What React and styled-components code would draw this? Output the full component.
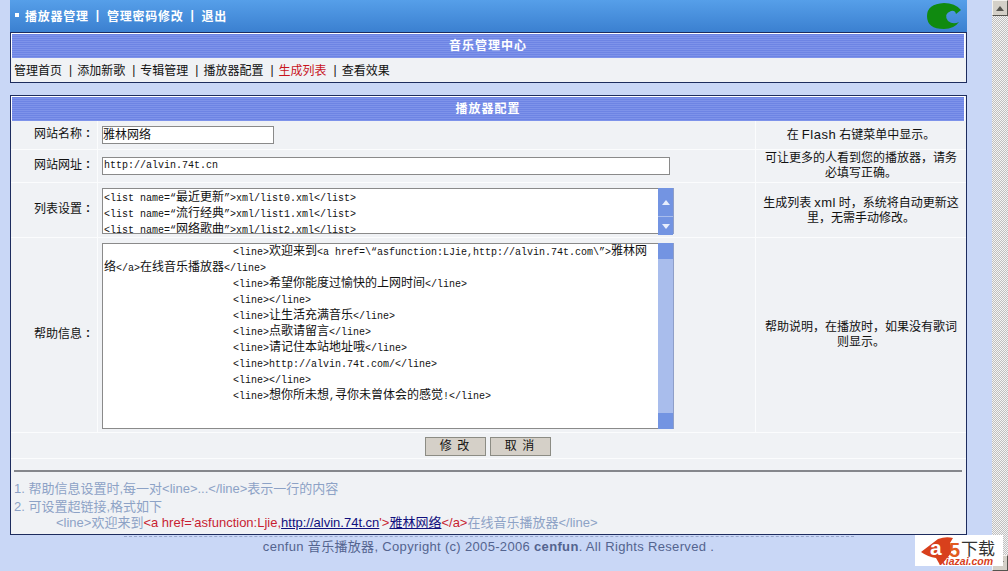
import React from 'react';
import styled, { createGlobalStyle } from 'styled-components';

const SANS = '"Liberation Sans", "Noto Sans CJK SC", sans-serif';
const CJK = '"Noto Sans CJK SC", sans-serif';

const GlobalStyle = createGlobalStyle`
  html, body {
    margin: 0;
    padding: 0;
    height: 571px;
    overflow: hidden;
    background: #c9d7f6;
    font-family: ${SANS};
    font-size: 12px;
    color: #111;
  }
`;

const Page = styled.div`
  position: relative;
  display: flex;
  width: 1008px;
  height: 571px;
  overflow: hidden;
`;

const Main = styled.div`
  width: 992px;
  padding-left: 10px;
  box-sizing: border-box;
`;

const Content = styled.div`
  width: 957px;
`;

const TopBar = styled.div`
  height: 32px;
  padding: 0 6px 0 5px;
  display: flex;
  align-items: center;
  justify-content: space-between;
  background: linear-gradient(#569fe9, #3b80d0);
  color: #fff;
  font-weight: bold;
`;

const TopLinks = styled.div`
  display: flex;
  align-items: center;
  gap: 7px;
  padding-bottom: 2px;
  letter-spacing: 0.75px;
`;

const Dot = styled.span`
  width: 4px;
  height: 4px;
  margin-right: -1px;
  background: #fff;
`;

const Panel = styled.div`
  border: 1px solid #1d2c5e;
  background: #f0f2f5;
  margin-bottom: 12px;
`;

const PanelTitle = styled.div`
  height: 24px;
  line-height: 24px;
  border: 1px solid #fff;
  border-bottom: 0;
  margin-right: 1px;
  text-align: center;
  color: #fff;
  font-weight: bold;
  letter-spacing: 1px;
  background: repeating-linear-gradient(#6d84e4 0 1px, #7e93ea 1px 2px);
`;

const Nav = styled.div`
  height: 23px;
  padding: 0 0 1px 3px;
  display: flex;
  align-items: center;
  gap: 5px;
`;

const NavLink = styled.span`
  color: ${(p) => (p.$active ? '#c8141e' : '#111')};
`;

const Sep = styled.span`
  margin-left: 2px;
  font-weight: normal;
  color: #111;
`;

const FormRow = styled.div`
  display: grid;
  grid-template-columns: 87px 658px 1fr;
  height: ${(p) => p.$h}px;
  background: #f0f2f5;
  border-bottom: 1px solid #fbfcfd;
  box-sizing: border-box;
`;

const Label = styled.div`
  display: flex;
  align-items: center;
  gap: 4px;
  padding: 0 0 5px 23px;
  border-right: 1px solid #fbfcfd;
  box-sizing: border-box;
`;

const Colon = styled.span`
  font-weight: bold;
`;

const FieldCell = styled.div`
  padding-left: 4px;
  padding-top: ${(p) => p.$top || 0}px;
  border-right: 1px solid #fbfcfd;
`;

const Hint = styled.div`
  display: flex;
  align-items: center;
  justify-content: center;
  padding: 0 4px;
  text-align: center;
  line-height: 15px;
`;

const Wide = styled.span`
  margin: 0 3px;
  font-size: 13px;
  letter-spacing: 0.5px;
`;

const Input = styled.div`
  width: ${(p) => p.$w}px;
  height: 18px;
  line-height: 16px;
  box-sizing: border-box;
  border: 1px solid #8a8a8a;
  background: #fff;
  padding-left: ${(p) => (p.$mono ? '1px' : '0')};
  overflow: hidden;
  white-space: pre;
  font-size: ${(p) => (p.$mono ? '10px' : '12px')};
  font-family: ${(p) => (p.$mono ? '"Liberation Mono", monospace' : SANS)};
`;

const TextBox = styled.div`
  display: flex;
  width: 572px;
  height: ${(p) => p.$h}px;
  box-sizing: border-box;
  border: 1px solid #8a8a8a;
  border-right: 0;
  background: #fff;
`;

const Text = styled.div`
  flex: 1;
  overflow: hidden;
  padding: ${(p) => p.$top || 0}px 0 0 1px;
  font-family: "Liberation Mono", monospace;
  font-size: 10px;
  line-height: 16px;
`;

const Line = styled.div`
  padding-left: ${(p) => p.$indent || 0}px;
  white-space: pre-wrap;
`;

const Han = styled.span`
  font-family: ${CJK};
  font-size: 12px;
  line-height: 0;
`;

const BoxBar = styled.div`
  width: 16px;
  margin-top: -1px;
  margin-bottom: -1px;
  display: flex;
  flex-direction: column;
  background: #a9bdec;
  border-right: 1px solid #8f9fc8;
  box-sizing: border-box;
`;

const BoxBtn = styled.div`
  height: ${(p) => p.$h || 16}px;
  flex: ${(p) => (p.$fill ? 1 : 'none')};
  display: flex;
  align-items: center;
  justify-content: center;
  background: ${(p) => (p.$fill ? '#a9bdec' : '#7394e2')};
  border-bottom: ${(p) => (p.$line ? '1px solid #a9bdec' : '0')};
`;

const Actions = styled.div`
  height: 26px;
  display: flex;
  align-items: center;
  justify-content: center;
  gap: 4px;
  padding: 1px 2px 0 0;
  box-sizing: border-box;
  border-bottom: 1px solid #fbfcfd;
`;

const Button = styled.div`
  width: 61px;
  height: 19px;
  line-height: 17px;
  box-sizing: border-box;
  text-align: center;
  border: 1px solid #8c8c84;
  background: #d5d0c8;
  letter-spacing: 1px;
`;

const Rule = styled.div`
  height: 2px;
  margin: 11px 4px 8px 3px;
  background: #85878c;
`;

const Notes = styled.div`
  padding: 0 0 4px 3px;
  color: #8da2c6;
  font-size: 13px;
`;

const NoteLine = styled.div`
  height: ${(p) => p.$h || 18}px;
  line-height: ${(p) => p.$h || 18}px;
  padding-left: ${(p) => p.$indent || 0}px;
  white-space: pre;
`;

const Red = styled.span`
  color: #c81e32;
`;

const Blue = styled.span`
  color: #10107e;
  text-decoration: underline;
`;

const Footer = styled.div`
  width: 730px;
  margin: -11px auto 0;
  padding-top: 2px;
  border-top: 1px dashed #9aa8cc;
  text-align: center;
  color: #54648f;
  font-size: 13px;
  line-height: 15px;
  letter-spacing: 0.33px;
`;

const PageBar = styled.div`
  width: 16px;
  height: 571px;
  display: flex;
  flex-direction: column;
  background-color: #fff;
  background-image: repeating-conic-gradient(#bfbfbf 0 25%, #f4f4f4 0 50%);
  background-size: 2px 2px;
`;

const PageBtn = styled.div`
  height: 16px;
  box-sizing: border-box;
  display: flex;
  align-items: center;
  justify-content: center;
  background: #d4d0c8;
  border: 1px solid;
  border-color: #f4f2ee #55544f #55544f #f4f2ee;
`;

const Spacer = styled.div`
  flex: 1;
`;

const Watermark = styled.div`
  position: absolute;
  left: 915px;
  top: 535px;
  width: 88px;
  height: 31px;
  background: #fff;
`;

const WmTitle = styled.span`
  position: absolute;
  left: 46px;
  top: 3px;
  font-family: ${CJK};
  font-size: 17px;
  line-height: 20px;
  color: #333;
`;

const WmDomain = styled.span`
  position: absolute;
  left: 25px;
  top: 20px;
  font-family: ${SANS};
  font-size: 10.5px;
  line-height: 12px;
  font-weight: bold;
  font-style: italic;
  color: #d8401c;
`;

const WmMark = styled.svg`
  position: absolute;
  left: 5px;
  top: 2px;
`;

const WmGlyph = styled.text`
  font-family: ${SANS};
  font-weight: bold;
`;

// mixed text: latin glyphs at 10px, han glyphs at 12px, like a bitmap SimSun
const mix = (text) =>
  text.split(/([\u4e00-\u9fff]+)/).map((part, i) =>
    /[\u4e00-\u9fff]/.test(part) ? <Han key={i}>{part}</Han> : part
  );

const Logo = () => (
  <svg width="34" height="26" viewBox="0 0 34 26">
    <path
      d="M34 7 Q28 0 17 0 Q0 1 0 13 Q0 26 17 26 Q27 26 32 19 Q26 22 21 18 Q16 11 24 8 Q28 7 29 11 Z"
      fill="#108a10"
    />
  </svg>
);

const Arrow = ({ down, color = '#e8eefc' }) => (
  <svg width="8" height="5" viewBox="0 0 8 5">
    <path d={down ? 'M0 0H8L4 5Z' : 'M4 0L8 5H0Z'} fill={color} />
  </svg>
);

const FieldLabel = ({ children }) => (
  <Label>
    <span>{children}</span>
    <Colon>:</Colon>
  </Label>
);

const listLines = [
  '<list name=“最近更新”>xml/list0.xml</list>',
  '<list name=“流行经典”>xml/list1.xml</list>',
  '<list name=“网络歌曲”>xml/list2.xml</list>',
];

const helpLines = [
  [129, '<line>欢迎来到<a href=\\“asfunction:LJie,http://alvin.74t.com\\”>雅林网'],
  [0, '络</a>在线音乐播放器</line>'],
  [129, '<line>希望你能度过愉快的上网时间</line>'],
  [129, '<line></line>'],
  [129, '<line>让生活充满音乐</line>'],
  [129, '<line>点歌请留言</line>'],
  [129, '<line>请记住本站地址哦</line>'],
  [129, '<line>http://alvin.74t.com/</line>'],
  [129, '<line></line>'],
  [129, '<line>想你所未想,寻你未曾体会的感觉!</line>'],
];

const navItems = ['管理首页', '添加新歌', '专辑管理', '播放器配置', '生成列表', '查看效果'];

export default function App() {
  return (
    <Page>
      <GlobalStyle />
      <Main>
        <Content>
          <TopBar>
            <TopLinks>
              <Dot />
              <span>播放器管理</span>
              <span>|</span>
              <span>管理密码修改</span>
              <span>|</span>
              <span>退出</span>
            </TopLinks>
            <Logo />
          </TopBar>
          <Panel>
            <PanelTitle>音乐管理中心</PanelTitle>
            <Nav>
              {navItems.map((item, i) => (
                <React.Fragment key={item}>
                  {i > 0 && <Sep>|</Sep>}
                  <NavLink $active={item === '生成列表'}>{item}</NavLink>
                </React.Fragment>
              ))}
            </Nav>
          </Panel>
          <Panel>
            <PanelTitle>播放器配置</PanelTitle>
            <FormRow $h={29}>
              <FieldLabel>网站名称</FieldLabel>
              <FieldCell $top={5}>
                <Input $w={172}>雅林网络</Input>
              </FieldCell>
              <Hint>
                <span>
                  在<Wide>Flash</Wide>右键菜单中显示。
                </span>
              </Hint>
            </FormRow>
            <FormRow $h={33}>
              <FieldLabel>网站网址</FieldLabel>
              <FieldCell $top={7}>
                <Input $w={568} $mono>http://alvin.74t.cn</Input>
              </FieldCell>
              <Hint>可让更多的人看到您的播放器，请务必填写正确。</Hint>
            </FormRow>
            <FormRow $h={55}>
              <FieldLabel>列表设置</FieldLabel>
              <FieldCell $top={5}>
                <TextBox $h={46}>
                  <Text $top={2}>
                    {listLines.map((line) => (
                      <Line key={line}>{mix(line)}</Line>
                    ))}
                  </Text>
                  <BoxBar>
                    <BoxBtn $h={28} $line>
                      <Arrow />
                    </BoxBtn>
                    <BoxBtn $h={18}>
                      <Arrow down />
                    </BoxBtn>
                  </BoxBar>
                </TextBox>
              </FieldCell>
              <Hint>
                <span>
                  生成列表<Wide>xml</Wide>时，系统将自动更新这里，无需手动修改。
                </span>
              </Hint>
            </FormRow>
            <FormRow $h={195}>
              <FieldLabel>帮助信息</FieldLabel>
              <FieldCell $top={5}>
                <TextBox $h={186}>
                  <Text $top={1}>
                    {helpLines.map(([indent, line]) => (
                      <Line key={line} $indent={indent}>
                        {mix(line)}
                      </Line>
                    ))}
                  </Text>
                  <BoxBar>
                    <BoxBtn />
                    <BoxBtn $fill />
                    <BoxBtn />
                  </BoxBar>
                </TextBox>
              </FieldCell>
              <Hint>帮助说明，在播放时，如果没有歌词则显示。</Hint>
            </FormRow>
            <Actions>
              <Button>修 改</Button>
              <Button>取 消</Button>
            </Actions>
            <Rule />
            <Notes>
              <NoteLine>1. 帮助信息设置时,每一对&lt;line&gt;...&lt;/line&gt;表示一行的内容</NoteLine>
              <NoteLine>2. 可设置超链接,格式如下</NoteLine>
              <NoteLine $indent={42} $h={14}>
                &lt;line&gt;欢迎来到<Red>&lt;a href='asfunction:Ljie,</Red>
                <Blue>http://alvin.74t.cn</Blue>
                <Red>'&gt;</Red>
                <Blue>雅林网络</Blue>
                <Red>&lt;/a&gt;</Red>在线音乐播放器&lt;/line&gt;
              </NoteLine>
            </Notes>
          </Panel>
          <Footer>
            cenfun 音乐播放器, Copyright (c) 2005-2006 <b>cenfun</b>. All Rights Reserved .
          </Footer>
        </Content>
      </Main>
      <PageBar>
        <PageBtn>
          <Arrow color="#55544f" />
        </PageBtn>
        <Spacer />
        <PageBtn>
          <Arrow down color="#55544f" />
        </PageBtn>
      </PageBar>
      <Watermark>
        <WmMark width="44" height="29" viewBox="0 0 44 29">
          <path d="M1 15 L18 2 Q26 -1 33 1 L30 6 Q34 14 28 20 Q24 24 20 28 L16 21 Q8 20 1 15 Z" fill="#d8401c" />
          <WmGlyph x="10" y="18" fontSize="21" fill="#fff">a</WmGlyph>
          <WmGlyph x="29" y="20" fontSize="20" fill="#e25a20">5</WmGlyph>
        </WmMark>
        <WmTitle>下载</WmTitle>
        <WmDomain>xiazai.com</WmDomain>
      </Watermark>
    </Page>
  );
}
